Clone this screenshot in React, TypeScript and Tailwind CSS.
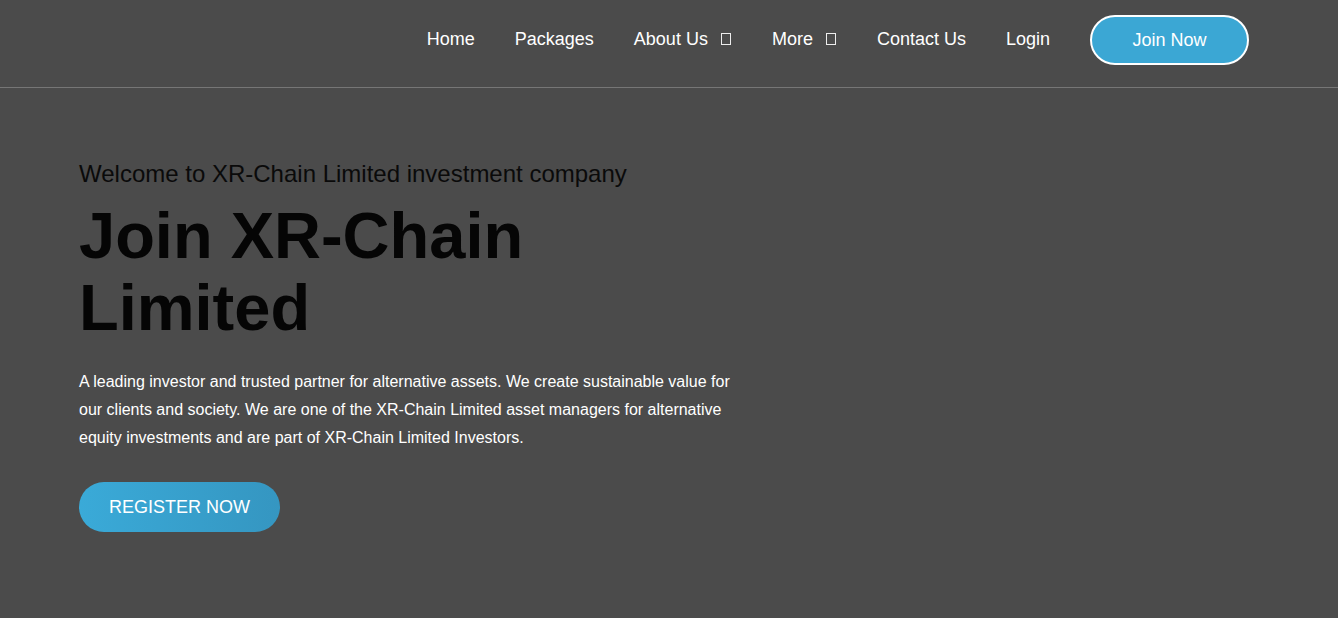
const navItems: { label: string; dropdown?: boolean }[] = [
  { label: "Home" },
  { label: "Packages" },
  { label: "About Us", dropdown: true },
  { label: "More", dropdown: true },
  { label: "Contact Us" },
  { label: "Login" },
];

function MissingGlyph() {
  return (
    <span className="ml-[13px] mr-[1px] inline-block h-[12px] w-[10px] border border-white/90" />
  );
}

export default function App() {
  return (
    <div
      className="min-h-[618px] w-full bg-[#4b4b4b]"
      style={{ fontFamily: '"Liberation Sans", Arial, sans-serif' }}
    >
      <header className="flex items-center justify-end border-b border-[#767676] pb-[22px] pr-[89px] pt-[15px]">
        <nav className="flex items-center gap-10">
          {navItems.map((item) => (
            <a
              key={item.label}
              className="-mt-[2px] flex items-center text-[18px] leading-none text-white"
              href="#"
            >
              {item.label}
              {item.dropdown && <MissingGlyph />}
            </a>
          ))}
          <a
            className="flex h-[50px] w-[159px] items-center justify-center rounded-full border-2 border-white bg-[#3ba7d4] text-[18px] text-white"
            href="#"
          >
            Join Now
          </a>
        </nav>
      </header>

      <section className="pl-[79px] pt-[72px]">
        <p className="text-[24px] leading-[28px] text-[#0a0a0a]">
          Welcome to XR-Chain Limited investment company
        </p>
        <h1 className="mt-[12px] w-[560px] text-[65px] font-bold leading-[72px] text-[#050505]">
          Join XR-Chain Limited
        </h1>
        <p className="mt-[24px] w-[662px] text-[16px] leading-[28px] text-white">
          A leading investor and trusted partner for alternative assets. We
          create sustainable value for our clients and society. We are one of
          the XR-Chain Limited asset managers for alternative equity investments
          and are part of XR-Chain Limited Investors.
        </p>
        <a
          className="mt-[30px] flex h-[50px] w-[201px] items-center justify-center rounded-full bg-gradient-to-r from-[#3aaad8] to-[#3596c1] text-[18px] uppercase text-white"
          href="#"
        >
          Register Now
        </a>
      </section>
    </div>
  );
}
